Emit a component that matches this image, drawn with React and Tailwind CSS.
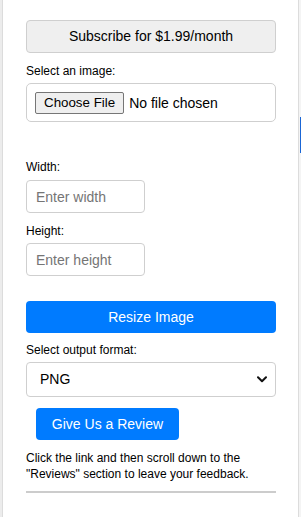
import React from 'react';

function Label({ children, className = '' }) {
    return (
        <div className={`text-[12px] leading-[15px] text-black ${className}`}>{children}</div>
    );
}

export default function App() {
    return (
        <div
            className="flex w-[301px] h-[517px] bg-[#ececec] overflow-hidden"
            style={{ fontFamily: '"Liberation Sans", Arial, sans-serif' }}
        >
            <div className="w-[3px] border-r border-[#dcdcdc]" />

            <div className="w-[295px] bg-white px-[23px] pt-[20px]">
                <button className="block w-[250px] h-[33px] rounded-[4px] border border-[#cfcfcf] bg-[#efefef] text-[14px] text-black">
                    Subscribe for $1.99/month
                </button>

                <Label className="mt-[11px]">Select an image:</Label>
                <div className="mt-[4px] h-[39px] w-[250px] rounded-[5px] border border-[#cfcfcf] pl-[8px] pt-[8px] flex items-start">
                    <span className="h-[22px] px-[8px] flex items-center rounded-[2px] border border-[#767676] bg-[#efefef] text-[13.33px] text-black">
                        Choose File
                    </span>
                    <span className="ml-[5px] h-[22px] flex items-center text-[14px] text-black">
                        No file chosen
                    </span>
                </div>

                <Label className="mt-[38px]">Width:</Label>
                <input
                    className="block mt-[5px] w-[119px] h-[33px] rounded-[4px] border border-[#cfcfcf] px-[9px] text-[14px] text-black placeholder:text-[#757575] outline-none"
                    placeholder="Enter width"
                    style={{ fontFamily: '"Liberation Sans", Arial, sans-serif' }}
                />

                <Label className="mt-[11px]">Height:</Label>
                <input
                    className="block mt-[4px] w-[119px] h-[33px] rounded-[4px] border border-[#cfcfcf] px-[9px] text-[14px] text-black placeholder:text-[#757575] outline-none"
                    placeholder="Enter height"
                    style={{ fontFamily: '"Liberation Sans", Arial, sans-serif' }}
                />

                <button className="block mt-[25px] w-[250px] h-[32px] rounded-[4px] bg-[#007bff] text-[14px] text-white">
                    Resize Image
                </button>

                <Label className="mt-[10px]">Select output format:</Label>
                <div className="mt-[4px] w-[250px] h-[35px] rounded-[4px] border border-[#cfcfcf] flex items-center justify-between pl-[13px] pr-[8px]">
                    <span className="text-[14px] text-black">PNG</span>
                    <svg width="10" height="7" viewBox="0 0 10 7" fill="none">
                        <path d="M1 1.2 L5 5.2 L9 1.2" stroke="#111" strokeWidth="2" strokeLinecap="round" strokeLinejoin="round" />
                    </svg>
                </div>

                <button className="block mt-[11px] ml-[10px] w-[143px] h-[32px] rounded-[4px] bg-[#007bff] text-[14px] text-white">
                    Give Us a Review
                </button>

                <p className="mt-[10px] text-[12px] leading-[16px] text-black">
                    Click the link and then scroll down to the "Reviews" section to leave your feedback.
                </p>

                <div className="mt-[9px] h-[2px] w-[250px] bg-[#cccccc]" />
            </div>

            <div className="w-[3px] border-l border-[#dcdcdc] bg-[#f4f4f4]">
                <div className="mt-[117px] ml-[1px] h-[36px] w-[1px] bg-[#1a66d6]" />
            </div>
        </div>
    );
}
